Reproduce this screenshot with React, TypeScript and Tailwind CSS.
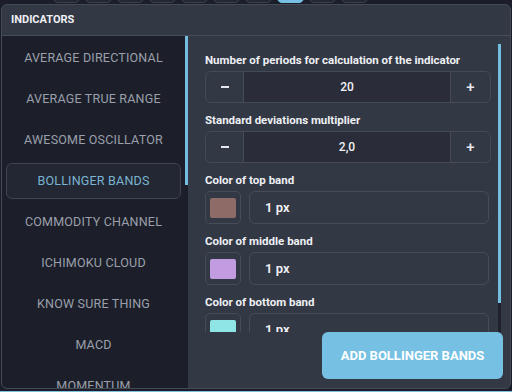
import React from 'react';

const indicators = [
  'Average Directional',
  'Average True Range',
  'Awesome Oscillator',
  'Bollinger Bands',
  'Commodity Channel',
  'Ichimoku Cloud',
  'Know Sure Thing',
  'MACD',
  'Momentum',
];

const Stepper: React.FC<{ label: string; value: string }> = ({ label, value }) => (
  <div className="mb-[10px]">
    <div className="h-[14px] leading-[14px] text-[11.5px] font-bold text-[#eef0f4]">{label}</div>
    <div className="mt-[4px] flex h-[32px] w-[286px] rounded-[6px] border border-[#454a57] overflow-hidden">
      <div className="w-[38px] flex items-center justify-center border-r border-[#454a57] text-[#e6e8ee]">
        <span className="block w-[8px] h-[1.5px] bg-[#e6e8ee]" />
      </div>
      <div className="flex-1 flex items-center justify-center bg-[#2a2d39] text-[12px] font-medium text-[#f1f2f5]">
        {value}
      </div>
      <div className="w-[40px] flex items-center justify-center border-l border-[#454a57] text-[15px] font-medium text-[#e6e8ee]">
        +
      </div>
    </div>
  </div>
);

const ColorRow: React.FC<{ label: string; color: string }> = ({ label, color }) => (
  <div className="mb-[10px]">
    <div className="h-[14px] leading-[14px] text-[11.5px] font-bold text-[#eef0f4]">{label}</div>
    <div className="mt-[4px] flex gap-[8px] h-[33px]">
      <div className="w-[36px] rounded-[5px] border border-[#474c59] flex items-center justify-center">
        <div className="w-[26px] h-[20px] rounded-[2px]" style={{ backgroundColor: color }} />
      </div>
      <div className="w-[240px] rounded-[6px] border border-[#474c59] flex items-center pl-[15px] text-[13px] font-semibold text-[#f1f2f5]">
        1 px
      </div>
    </div>
  </div>
);

export default function App() {
  return (
    <div
      className="w-[512px] h-[392px] bg-[#1b1e28] overflow-hidden flex flex-col"
      style={{ fontFamily: 'Roboto, "Liberation Sans", sans-serif' }}
    >
      {/* tab strip behind the dialog */}
      <div className="h-[4px] pl-[53px] flex gap-[5px] overflow-hidden">
        {Array.from({ length: 10 }).map((_, i) => (
          <div
            key={i}
            className={`w-[27px] h-[12px] -mt-[9px] rounded-[5px] border ${
              i === 7 ? 'bg-[#76c1e3] border-[#76c1e3]' : 'bg-[#232733] border-[#3b4050]'
            }`}
          />
        ))}
      </div>

      <div className="ml-[1px] w-[510px] h-[385px] rounded-[6px] border border-[#454a57] bg-[#333845] flex flex-col overflow-hidden">
        <div className="h-[31px] shrink-0 border-b border-[#474c59] px-[9px] flex items-center">
          <span className="text-[11px] font-bold text-[#eef0f4]">INDICATORS</span>
        </div>

        <div className="flex-1 min-h-0 flex">
          {/* sidebar */}
          <div className="w-[186px] shrink-0 bg-[#1c1f2a] flex">
            <div className="flex-1 overflow-hidden pt-[4px] px-[4px] flex flex-col gap-[5px]">
              {indicators.map((name) => {
                const active = name === 'Bollinger Bands';
                return (
                  <div
                    key={name}
                    className={`h-[36px] shrink-0 flex items-center justify-center rounded-[6px] border uppercase text-[12.5px] tracking-[0.2px] ${
                      active
                        ? 'border-[#3f4452] bg-[#232733] text-[#7ab4d2]'
                        : 'border-transparent text-[#9a9fab]'
                    }`}
                  >
                    {name}
                  </div>
                );
              })}
            </div>
            <div className="w-[3px] flex flex-col">
              <div className="h-[149px] bg-[#72bde0]" />
            </div>
          </div>

          {/* settings */}
          <div className="flex-1 flex flex-col min-w-0">
            <div className="flex-1 min-h-0 flex">
              <div className="w-[310px] overflow-hidden pl-[17px] pt-[17px]">
                <Stepper label="Number of periods for calculation of the indicator" value="20" />
                <Stepper label="Standard deviations multiplier" value="2,0" />
                <ColorRow label="Color of top band" color="#8f6b68" />
                <ColorRow label="Color of middle band" color="#c29ce0" />
                <ColorRow label="Color of bottom band" color="#8fe4e6" />
              </div>
              <div className="w-[3px] mt-[8px] bg-[#1f222c] flex flex-col">
                <div className="h-[259px] bg-[#72bde0]" />
              </div>
            </div>
            <div className="h-[56px] shrink-0 flex justify-end items-start pr-[7px]">
              <button className="w-[181px] h-[47px] rounded-[6px] bg-[#76c1e3] text-white text-[13px] font-bold">
                ADD BOLLINGER BANDS
              </button>
            </div>
          </div>
        </div>
      </div>

      <div className="flex-1 border-b border-[#7fbfdc]" />
    </div>
  );
}
